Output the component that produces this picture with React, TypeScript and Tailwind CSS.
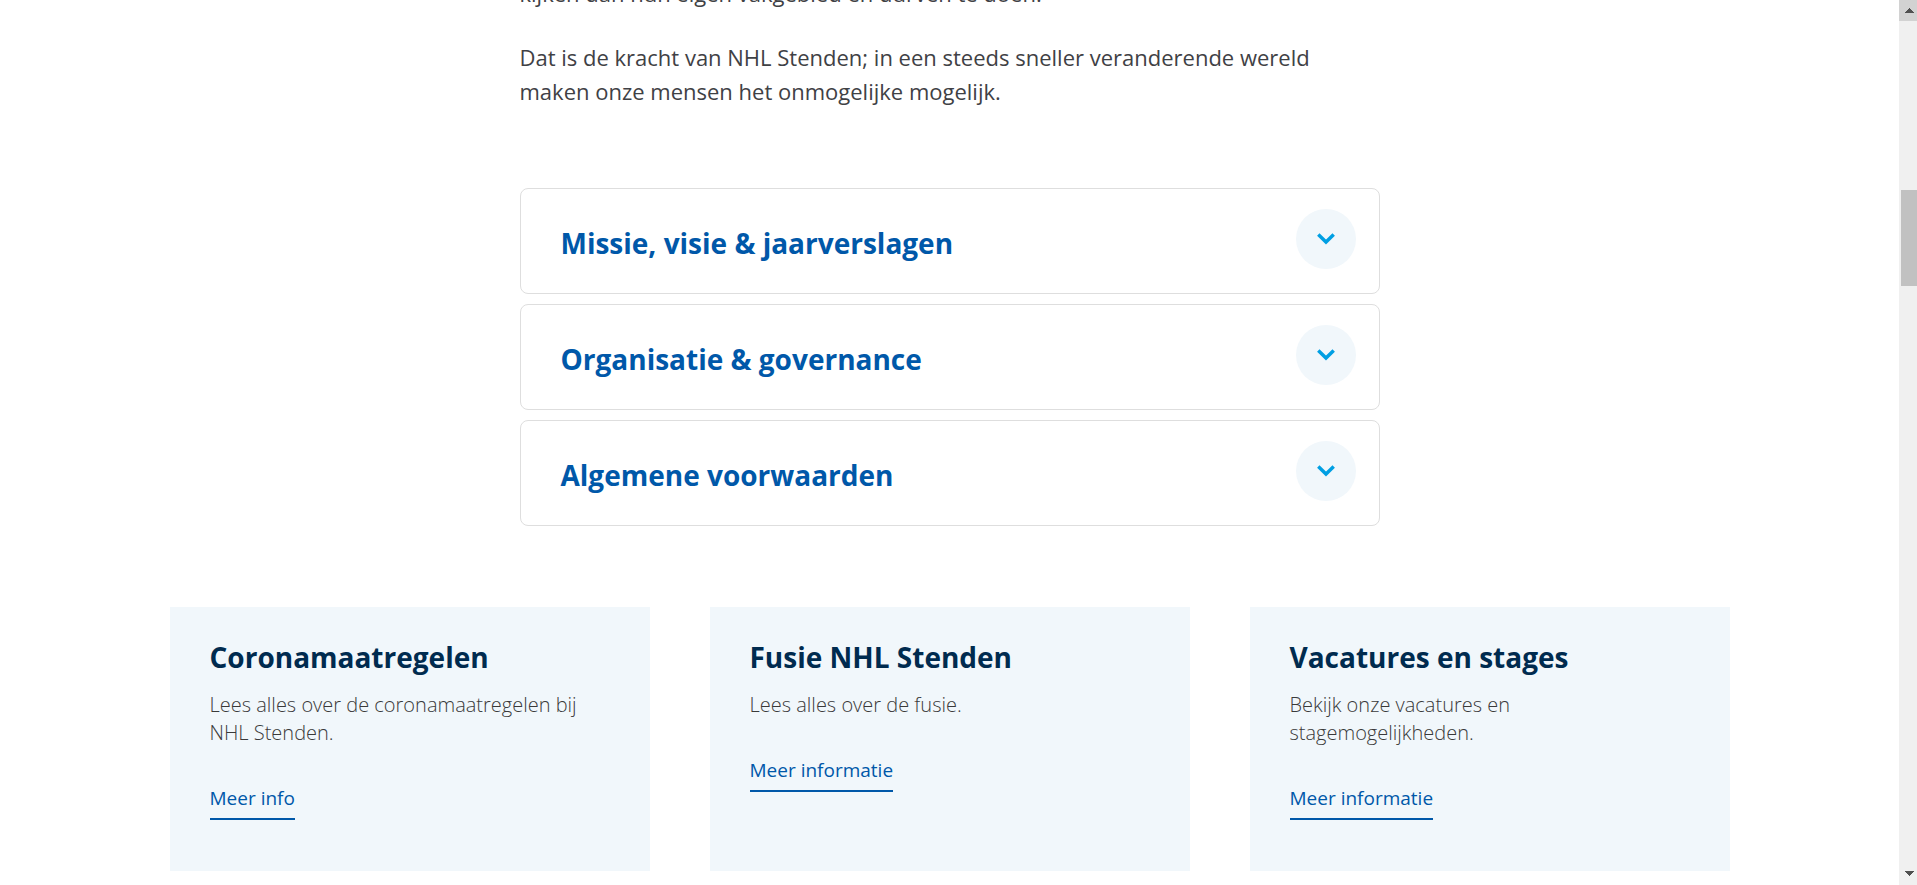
const sections = ["Missie, visie & jaarverslagen", "Organisatie & governance", "Algemene voorwaarden"];

const cards = [
  { title: "Coronamaatregelen", text: "Lees alles over de coronamaatregelen bij NHL Stenden.", link: "Meer info" },
  { title: "Fusie NHL Stenden", text: "Lees alles over de fusie.", link: "Meer informatie" },
  { title: "Vacatures en stages", text: "Bekijk onze vacatures en stagemogelijkheden.", link: "Meer informatie" },
];

function Intro() {
  return (
    <div className="-mt-6 flex flex-col gap-[30px] text-[22px] leading-[34px] text-[#3f4145]">
      <p>kijken dan hun eigen vakgebied en durven te doen.</p>
      <p>
        Dat is de kracht van NHL Stenden; in een steeds sneller veranderende wereld maken onze mensen
        het onmogelijke mogelijk.
      </p>
    </div>
  );
}

function AccordionItem({ title }: { title: string }) {
  return (
    <h3>
      <button
        type="button"
        aria-expanded={false}
        className="flex w-full items-start justify-between rounded-lg border border-[#dedede] py-5 pr-[23px] pl-10 text-left text-[28px] leading-[60px] font-bold text-[#0058a9]"
      >
        <span className="pt-1">{title}</span>
        <span className="flex size-[60px] items-center justify-center rounded-full bg-[#f1f7fb]">
          <svg viewBox="0 0 18 12" className="h-3 w-[18px]" fill="none" aria-hidden="true">
            <path d="M1.3 1.6 9 9 16.7 1.6" stroke="#009fe3" strokeWidth="3.5" />
          </svg>
        </span>
      </button>
    </h3>
  );
}

function Card({ title, text, link }: { title: string; text: string; link: string }) {
  return (
    <article className="bg-[#f1f7fb] px-10 pt-8 pb-[51px]">
      <h2 className="text-[28px] leading-9 font-bold text-[#002b4f]">{title}</h2>
      <p className="mt-4 text-[20px] leading-7 font-light text-[#3a3a3a]">{text}</p>
      <a
        href="#"
        className="mt-[37px] inline-block border-b-2 border-[#0058a9] pb-1.5 text-[19px] leading-7 font-medium text-[#0058a9]"
      >
        {link}
      </a>
    </article>
  );
}

function ScrollTrack() {
  return (
    <div className="flex w-[18px] shrink-0 flex-col bg-[#f0f0f0]" aria-hidden="true">
      <div className="flex h-[21px] items-center justify-center bg-[#d2d2d2] pl-[3px]">
        <svg viewBox="0 0 9 5" className="h-[5px] w-[9px]" shapeRendering="crispEdges">
          <path d="M0 5 4.5 0 9 5Z" fill="#505050" />
        </svg>
      </div>
      <div className="mt-[169px] ml-0.5 h-24 bg-[#c1c1c1]" />
      <div className="mt-auto flex h-[23px] items-center justify-center pl-[3px]">
        <svg viewBox="0 0 9 5" className="h-[5px] w-[9px]" shapeRendering="crispEdges">
          <path d="M0 0H9L4.5 5Z" fill="#505050" />
        </svg>
      </div>
    </div>
  );
}

export default function App() {
  return (
    <div className="flex h-screen overflow-hidden bg-white font-['Open_Sans',sans-serif]">
      <main className="min-w-0 grow overflow-hidden">
        <section className="mx-auto max-w-[860px]">
          <Intro />
          <div className="mt-20 flex flex-col gap-2.5">
            {sections.map((title) => (
              <AccordionItem key={title} title={title} />
            ))}
          </div>
        </section>
        <section className="mx-auto mt-[81px] grid max-w-[1560px] grid-cols-3 gap-[60px]">
          {cards.map((card) => (
            <Card key={card.title} {...card} />
          ))}
        </section>
      </main>
      <ScrollTrack />
    </div>
  );
}
